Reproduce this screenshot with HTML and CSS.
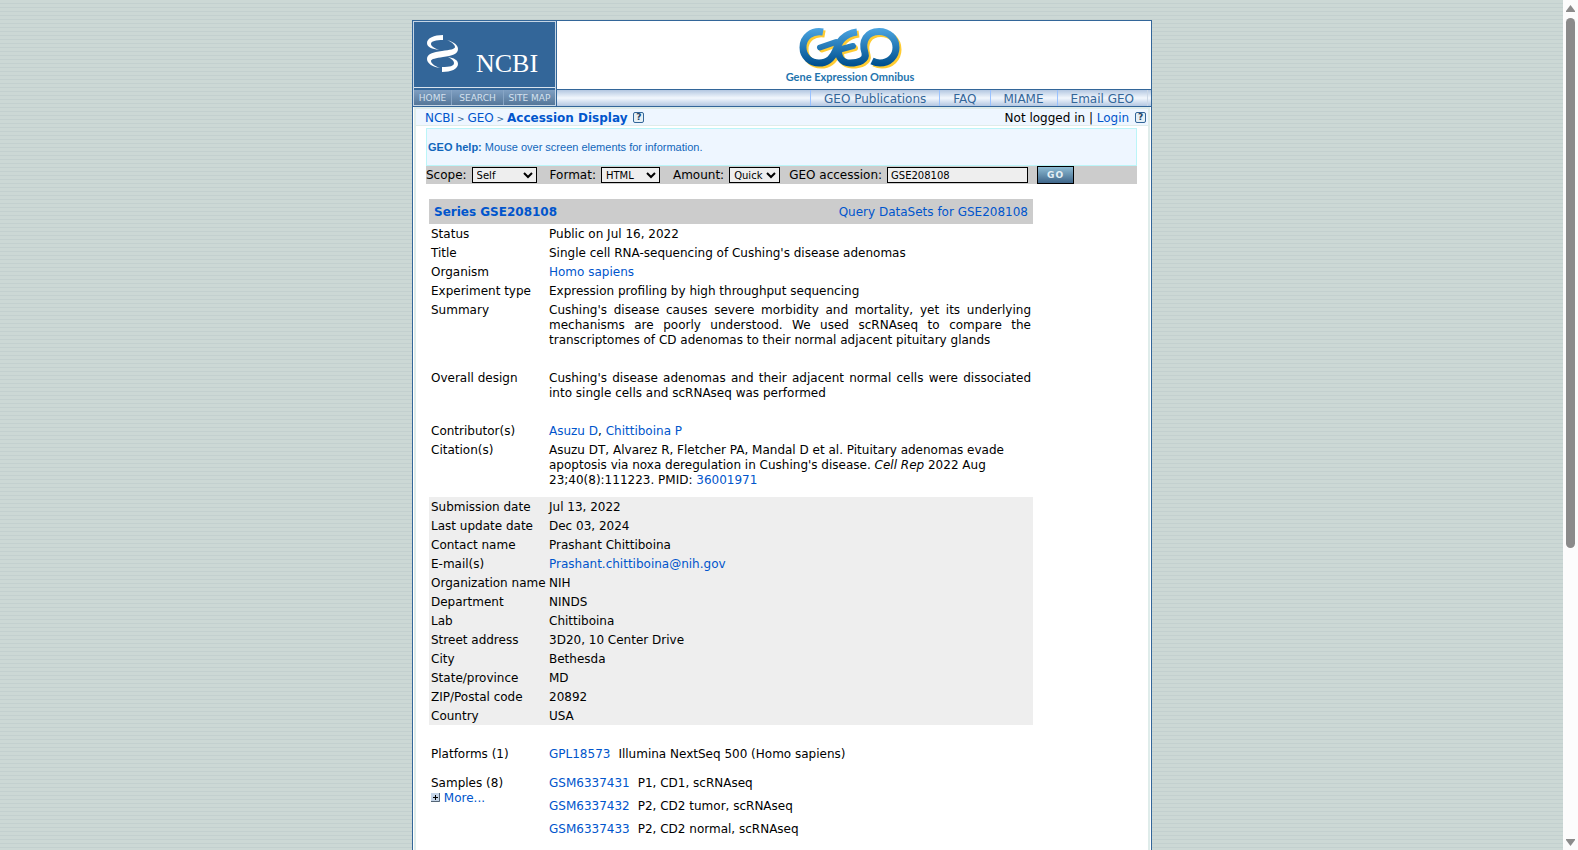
FILE: index.html
```html
<!DOCTYPE html>
<html lang="en">
<head>
  <meta charset="UTF-8">
  <meta name="viewport" content="width=device-width, initial-scale=1.0">
  <title>GEO Accession viewer</title>
  <link rel="stylesheet" href="styles.css">
</head>
<body>
  <div class="page">
    <div class="wrap">
      <header class="top">
        <div class="ncbi">
          <a class="ncbi-logo" href="#">
            <svg width="141" height="65" viewBox="0 0 141 65">
              <g fill="#fff">
                <path d="M29 13v5c-7 0-12 1-12 4 0 2 3 4 8 6-7-1-12-3-12-7 0-5 7-8 16-8z"/>
                <path d="M33 18c7 2 11 5 11 9 0 5-6 7-15 8-7 1-12 2-12 4s3 5 9 7c-8-1-13-5-13-9 0-5 6-7 15-8 8-1 13-2 13-4s-3-5-8-7z"/>
                <path d="M34 35c6 1 10 3 10 7 0 5-7 8-16 8v-5c8 0 12-1 12-4 0-2-2-4-6-6z"/>
              </g>
              <text x="62" y="50" class="ncbi-text">NCBI</text>
            </svg>
          </a>
          <nav class="ncbi-nav">
            <a class="home" href="#">HOME</a>
            <a href="#">SEARCH</a>
            <a href="#">SITE MAP</a>
          </nav>
        </div>
        <div class="geo">
          <a class="geo-logo" href="#">
            <svg width="136" height="60" viewBox="0 0 136 60">
              <defs>
                <linearGradient id="blue" gradientUnits="userSpaceOnUse" x1="0" y1="2" x2="0" y2="38">
                  <stop offset="0" stop-color="#4aa3df"/>
                  <stop offset="1" stop-color="#00508f"/>
                </linearGradient>
                <g id="geo" fill="none" stroke-width="7" stroke-linejoin="round">
                  <path d="M38 5C27 3 18 10 18 20.500 18 30 26 36 34 36c10 0 14-6 17-13 3-8 7-16 21-18"/>
                  <path stroke-width="6" stroke-linecap="round" d="M35 20.500 51 15M55 22.500 68 19"/>
                  <path d="M54 20c-2 10 3 16 11 16 9 0 17-3 15-10C76 14 82 4.500 94 4.500c10 0 17 7 17 16S104 36 95 36c-3 0-6-1-8-2"/>
                </g>
              </defs>
              <use href="#geo" x="2" y="2" stroke="#fc3"/>
              <use href="#geo" stroke="url(#blue)"/>
              <text x="65" y="54" text-anchor="middle" class="geo-text">Gene Expression Omnibus</text>
            </svg>
          </a>
          <nav class="geo-nav">
            <a href="#">GEO Publications</a>
            <a href="#">FAQ</a>
            <a href="#">MIAME</a>
            <a href="#">Email GEO</a>
          </nav>
        </div>
      </header>

      <div class="body">
        <div class="crumbs">
          <div class="path">
            <a href="#">NCBI</a><span class="gt"> &gt; </span><a href="#">GEO</a><span class="gt"> &gt; </span><a class="here" href="#">Accession Display</a>
            <a class="q" href="#">?</a>
          </div>
          <div class="login">Not logged in | <a href="#">Login</a> <a class="q" href="#">?</a></div>
        </div>

        <div class="content">
          <p class="help"><b>GEO help:</b> Mouse over screen elements for information.</p>

          <form class="query" action="#">
            <label for="scope">Scope:</label>
            <select id="scope" class="scope">
              <option>Self</option>
              <option>Platform</option>
              <option>Samples</option>
              <option>Series</option>
              <option>Family</option>
            </select>
            <label for="format">Format:</label>
            <select id="format" class="format">
              <option>HTML</option>
              <option>SOFT</option>
              <option>MINiML</option>
            </select>
            <label for="amount">Amount:</label>
            <select id="amount" class="amount">
              <option>Brief</option>
              <option selected>Quick</option>
            </select>
            <label for="acc">GEO accession:</label>
            <input type="text" id="acc" value="GSE208108">
            <button type="submit">GO</button>
          </form>

          <div class="record">
            <div class="record-head">
              <a class="series" href="#">Series GSE208108</a>
              <a href="#">Query DataSets for GSE208108</a>
            </div>
            <table class="fields">
              <tr><th>Status</th><td>Public on Jul 16, 2022</td></tr>
              <tr><th>Title</th><td>Single cell RNA-sequencing of Cushing's disease adenomas</td></tr>
              <tr><th>Organism</th><td><a href="#">Homo sapiens</a></td></tr>
              <tr><th>Experiment type</th><td>Expression profiling by high throughput sequencing</td></tr>
              <tr class="long"><th>Summary</th><td>Cushing's disease causes severe morbidity and mortality, yet its underlying mechanisms are poorly understood. We used scRNAseq to compare the transcriptomes of CD adenomas to their normal adjacent pituitary glands</td></tr>
              <tr class="long"><th>Overall design</th><td>Cushing's disease adenomas and their adjacent normal cells were dissociated into single cells and scRNAseq was performed</td></tr>
              <tr><th>Contributor(s)</th><td><a href="#">Asuzu D</a>, <a href="#">Chittiboina P</a></td></tr>
              <tr><th>Citation(s)</th><td class="cite">Asuzu DT, Alvarez R, Fletcher PA, Mandal D et al. Pituitary adenomas evade apoptosis via noxa deregulation in Cushing's disease. <i>Cell Rep</i> 2022 Aug 23;40(8):111223. PMID: <a href="#">36001971</a></td></tr>
            </table>
            <table class="fields contact">
              <tr><th>Submission date</th><td>Jul 13, 2022</td></tr>
              <tr><th>Last update date</th><td>Dec 03, 2024</td></tr>
              <tr><th>Contact name</th><td>Prashant Chittiboina</td></tr>
              <tr><th>E-mail(s)</th><td><a href="#">Prashant.chittiboina@nih.gov</a></td></tr>
              <tr><th>Organization name</th><td>NIH</td></tr>
              <tr><th>Department</th><td>NINDS</td></tr>
              <tr><th>Lab</th><td>Chittiboina</td></tr>
              <tr><th>Street address</th><td>3D20, 10 Center Drive</td></tr>
              <tr><th>City</th><td>Bethesda</td></tr>
              <tr><th>State/province</th><td>MD</td></tr>
              <tr><th>ZIP/Postal code</th><td>20892</td></tr>
              <tr><th>Country</th><td>USA</td></tr>
            </table>
            <table class="fields platforms">
              <tr><th>Platforms (1)</th><td><a href="#">GPL18573</a><span class="desc">Illumina NextSeq 500 (Homo sapiens)</span></td></tr>
            </table>
            <table class="fields samples">
              <tr>
                <th>
                  Samples (8)<br>
                  <a class="more" href="#">
                    <svg width="9" height="9" viewBox="0 0 9 9">
                      <rect width="9" height="9" fill="#c5d5e8"/>
                      <path d="M8.500 0v8.500H0" fill="none" stroke="#567"/>
                      <path d="M2 4.500h5M4.500 2v5" stroke="#000"/>
                    </svg>
                    More...
                  </a>
                </th>
                <td>
                  <div class="sample"><a href="#">GSM6337431</a><span class="desc">P1, CD1, scRNAseq</span></div>
                  <div class="sample"><a href="#">GSM6337432</a><span class="desc">P2, CD2 tumor, scRNAseq</span></div>
                  <div class="sample"><a href="#">GSM6337433</a><span class="desc">P2, CD2 normal, scRNAseq</span></div>
                </td>
              </tr>
            </table>
          </div>
        </div>
      </div>
    </div>
  </div>
  <div class="scrollbar">
    <svg width="9" height="7" viewBox="0 0 9 7"><path d="M4.500 0 9 6v1H0V6z" fill="#8b8b8b"/></svg>
    <div class="thumb"></div>
    <svg class="down" width="9" height="7" viewBox="0 0 9 7"><path d="M4.500 7 9 1V0H0v1z" fill="#8b8b8b"/></svg>
  </div>
</body>
</html>
```

FILE: styles.css
```css
* {
  box-sizing: border-box;
}
body {
  margin: 0;
  display: flex;
  height: 100vh;
  overflow: hidden;
  font: 12px/15px "DejaVu Sans", Verdana, sans-serif;
  color: #000;
}
a {
  color: #0055cc;
  text-decoration: none;
}
a:hover {
  text-decoration: underline;
}
.page {
  flex: 1;
  display: flex;
  justify-content: center;
  padding: 20px 0 0 1px;
  overflow: hidden;
  background: repeating-linear-gradient(#ccd8d5 0, #ccd8d5 3px, #c3d0cf 3px, #c3d0cf 4px);
}
.wrap {
  display: flex;
  flex-direction: column;
  width: 740px;
}

/* header */
.top {
  display: flex;
  height: 87px;
  background: #fff;
  border: 1px solid #336699;
}
.ncbi {
  width: 143px;
  background: #336699;
  border: 1px solid #c5d5e5;
}
.ncbi-logo {
  display: block;
  height: 66px;
  border-bottom: 1px solid #d8e3ee;
}
.ncbi-logo svg {
  display: block;
}
.ncbi-text {
  font-family: "Liberation Serif", serif;
  font-size: 26px;
  fill: #fff;
}
.ncbi-nav {
  display: flex;
  margin-top: 2px;
  height: 15px;
}
.ncbi-nav a {
  flex: 1;
  border-right: 1px solid #87a5c5;
  background: linear-gradient(#7f9fc2, #557799);
  color: #d5e1ee;
  font: 9px/16px "DejaVu Sans", sans-serif;
  text-align: center;
  white-space: nowrap;
}
.ncbi-nav .home {
  flex: 0 0 38px;
}
.ncbi-nav a:last-child {
  border-right: 0;
}
.geo {
  flex: 1;
  display: flex;
  flex-direction: column;
  border-left: 1px solid #336699;
}
.geo-logo {
  flex: 1;
  padding: 6px 0 0 228px;
}
.geo-logo svg {
  display: block;
}
.geo-text {
  font-family: Lato, sans-serif;
  font-size: 11px;
  font-weight: bold;
  fill: #1f74ae;
}
.geo-nav {
  display: flex;
  justify-content: flex-end;
  height: 17px;
  padding-right: 3px;
  border-top: 1px solid #336699;
  background: linear-gradient(#b3c7e1, #f2f7fd 50%, #b3c7e1);
}
.geo-nav a {
  padding: 0 13px;
  border-left: 1px solid #99c2ff;
  color: #336699;
  line-height: 18px;
}
.geo-nav a:last-child {
  border-right: 1px solid #ccd8e6;
}

/* main column */
.body {
  flex: 1;
  border: solid #336699;
  border-width: 0 1px;
  background: #fff;
  box-shadow: inset 1px 0 #fff, inset -1px 0 #fff, inset 3px 0 #dfecea, inset -3px 0 #dfecea;
}
.crumbs {
  display: flex;
  justify-content: space-between;
  height: 19px;
  margin: 0 3px;
  padding: 0 2px 0 9px;
  border: solid #dfecea;
  border-width: 2px 0 1px;
  background: #eef6ff;
  line-height: 18px;
}
.gt {
  color: #336699;
  font-size: 9px;
}
.here {
  font-weight: bold;
}
.q {
  display: inline-block;
  width: 11px;
  height: 11px;
  margin-left: 2px;
  border: 1px solid #336699;
  border-radius: 2px;
  background: #e6f0f5;
  color: #224466;
  font: bold 9px/9px "DejaVu Sans", sans-serif;
  text-align: center;
  vertical-align: 2px;
}
.content {
  padding: 2px 14px 0 13px;
}
.help {
  margin: 0;
  padding: 11px 1px 10px;
  border: 1px solid #bbf5f8;
  background: #eef6ff;
  color: #1166bb;
  font: 11px/15px "Liberation Sans", Arial, sans-serif;
}
.query {
  display: flex;
  align-items: center;
  height: 18px;
  background: #ccc;
}
.query select,
.query input {
  height: 16px;
  margin: 0 13px 0 5px;
  padding: 0;
  border: 1px solid #000;
  border-radius: 0;
  background: #eee;
  color: #000;
  font: 10px "DejaVu Sans", Verdana, sans-serif;
}
.query .scope {
  width: 65px;
}
.query .format {
  width: 59px;
}
.query .amount {
  width: 51px;
  margin-right: 9px;
}
.query input {
  width: 141px;
  margin-right: 9px;
  padding: 0 3px;
}
.query button {
  width: 37px;
  height: 18px;
  padding: 0;
  border: 1px solid #000;
  background: linear-gradient(#8dbbd3, #3f668a);
  color: #e6f0f5;
  font: bold 9px "DejaVu Sans", sans-serif;
  letter-spacing: 1px;
}

/* record */
.record {
  width: 604px;
  margin: 15px 0 0 3px;
}
.record-head {
  display: flex;
  justify-content: space-between;
  padding: 6px 5px 4px;
  background: #ccc;
}
.series {
  font-weight: bold;
}
.fields {
  width: 100%;
  border-collapse: collapse;
  table-layout: fixed;
}
.fields th,
.fields td {
  padding: 3px 2px 1px;
  vertical-align: top;
  text-align: left;
  font-weight: normal;
}
.fields th {
  width: 118px;
  white-space: nowrap;
}
.fields .long td {
  padding-bottom: 20px;
  text-align: justify;
}
.fields .cite {
  padding-right: 24px;
}
.contact {
  margin-top: 8px;
  background: #eee;
}
.platforms {
  margin-top: 19px;
}
.samples {
  margin-top: 10px;
}
.desc {
  margin-left: 8px;
}
.sample {
  margin-bottom: 8px;
}

/* scroll bar */
.scrollbar {
  display: flex;
  flex-direction: column;
  align-items: center;
  width: 15px;
  padding: 5px 0 4px;
  background: #fcfcfc;
}
.thumb {
  width: 9px;
  height: 530px;
  margin-top: 6px;
  border-radius: 5px;
  background: #8b8b8b;
}
.down {
  margin-top: auto;
}
```
